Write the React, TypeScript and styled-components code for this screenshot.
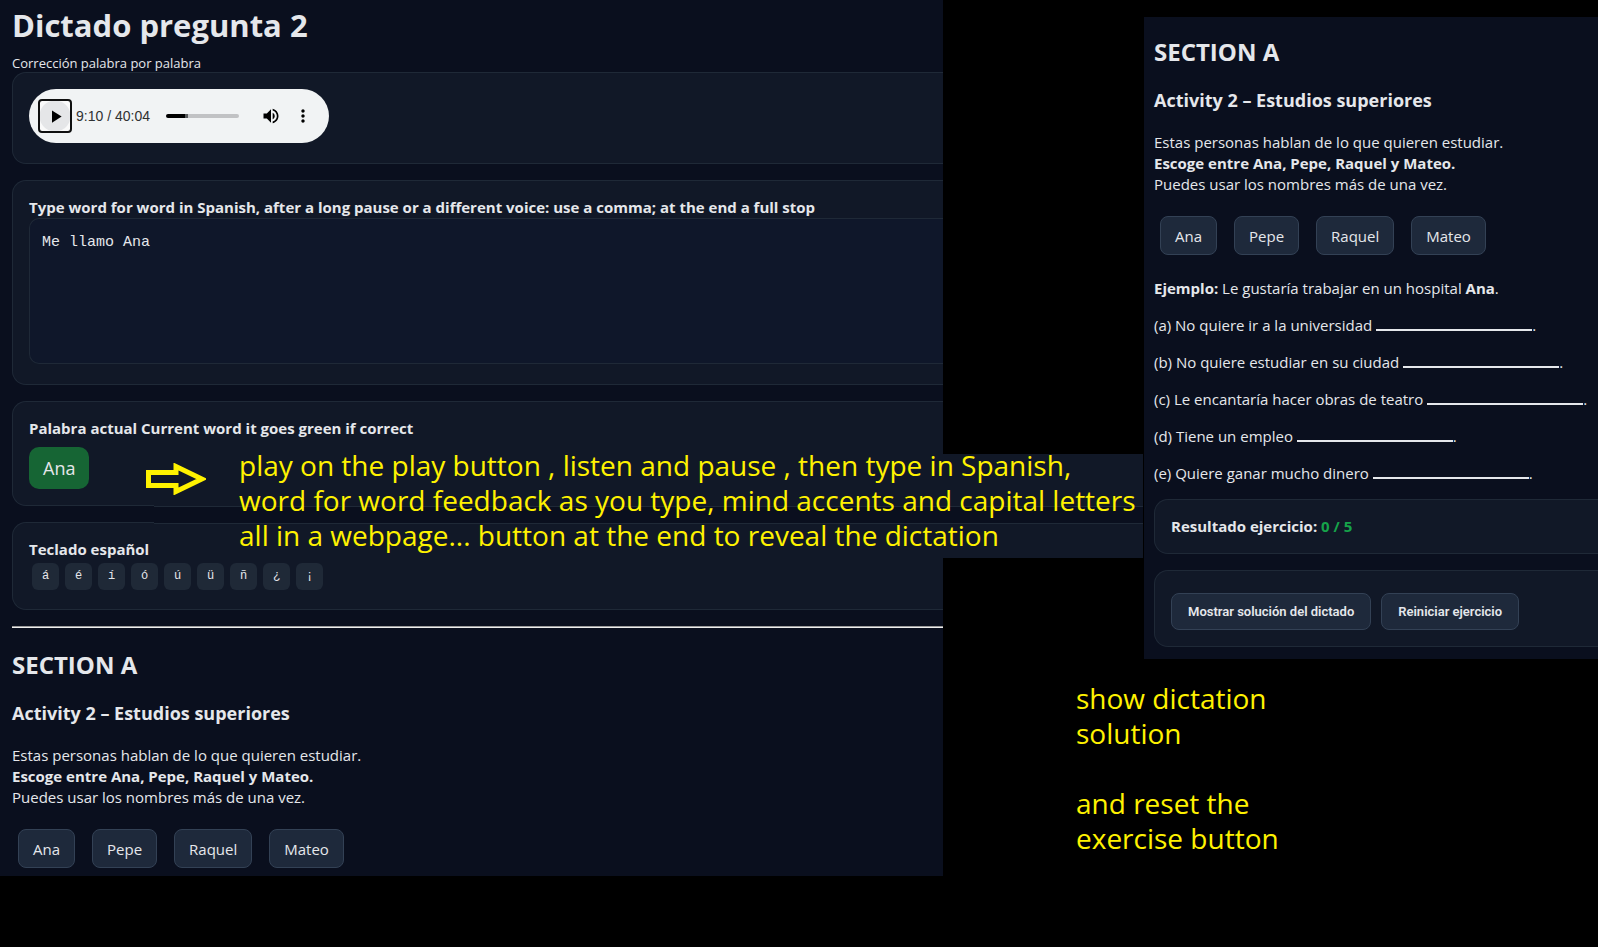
import React, { useState } from "react";
import styled, { createGlobalStyle, css } from "styled-components";
import { MdMoreVert, MdPlayArrow, MdVolumeUp } from "react-icons/md";

const GlobalStyle = createGlobalStyle`
  *, *::before, *::after { box-sizing: border-box; }
  body {
    margin: 0;
    background: #000;
    color: #e5e7eb;
    font-family: "Open Sans", "Noto Sans", sans-serif;
    font-size: 15px;
    line-height: 21px;
  }
  h1, h2, h3, p { margin: 0; }
  button { font: inherit; color: inherit; cursor: pointer; }
`;

const mono = css`
  font-family: "Liberation Mono", monospace;
`;

const Page = styled.div`
  position: relative;
  display: grid;
  grid-template-columns: minmax(0, 943fr) minmax(0, 201fr) minmax(0, 454fr);
  align-items: start;
  min-height: 100vh;
  overflow: hidden;
`;

const Panel = styled.section`
  background: #0a0f1e;
  overflow: hidden;
`;

const DictationPanel = styled(Panel)`
  grid-column: 1;
  padding: 4px 0 8px 12px;
`;

const ExercisePanel = styled(Panel)`
  grid-column: 3;
  margin-top: 17px;
  padding: 19px 0 12px 10px;
`;

const Title = styled.h1`
  font-size: 31px;
  line-height: 42px;
  white-space: nowrap;
`;

const Subtitle = styled.p`
  margin-top: 8px;
  font-size: 13px;
  line-height: 18px;
`;

const Card = styled.div`
  padding: 16px;
  background: #111827;
  border: 1px solid #1f2937;
  border-right: 0;
  border-radius: 14px 0 0 14px;

  & + & { margin-top: 16px; }
`;

const CardLabel = styled.label`
  display: block;
  font-weight: 700;
  white-space: nowrap;
`;

const Player = styled.div`
  display: flex;
  align-items: center;
  width: 300px;
  height: 54px;
  margin-bottom: 4px;
  padding: 0 10px 0 9px;
  background: #f1f3f4;
  border-radius: 27px;
  color: #000;

  & > * { flex-shrink: 0; }
`;

const PlayButton = styled.button`
  display: grid;
  place-items: center;
  width: 34px;
  height: 34px;
  padding: 0;
  border: 2px solid #101010;
  border-radius: 4px;
  background: radial-gradient(circle, #e5e6e8 15px, #fafafa 16px);
`;

const Time = styled.span`
  margin-left: 4px;
  width: 90px;
  font-family: "Liberation Sans", Arial, sans-serif;
  font-size: 14px;
  color: #303132;
`;

const Seek = styled.input`
  appearance: none;
  width: 73px;
  height: 4px;
  margin: 0 16px 0 0;
  border-radius: 2px;
  background: linear-gradient(to right, #000 26%, #55585a 26% 30%, #c1c2c4 30%);

  &::-webkit-slider-thumb { appearance: none; width: 0; height: 0; }
`;

const PlayerButton = styled.button`
  display: grid;
  place-items: center;
  width: 32px;
  height: 32px;
  padding: 0;
  border: 0;
  background: transparent;
`;

const Answer = styled.textarea`
  ${mono}
  display: block;
  width: 100%;
  height: 146px;
  margin-bottom: 4px;
  padding: 13px 12px;
  border: 1px solid #1f2937;
  border-right: 0;
  border-radius: 10px 0 0 10px;
  background: #0f172a;
  color: #e5e7eb;
  font-size: 15px;
  line-height: 21px;
  resize: none;
  outline: none;
`;

const AnswerCard = styled(Card)`
  padding-right: 0;
`;

const CurrentWord = styled.output`
  display: block;
  width: fit-content;
  margin-top: 8px;
  padding: 8px 14px;
  border-radius: 10px;
  background: #166534;
  font-size: 18px;
  line-height: 26px;
`;

const Keys = styled.div`
  display: flex;
  gap: 6px;
  padding: 3px;
`;

const Key = styled.button`
  && { ${mono} }
  width: 27px;
  height: 27px;
  padding: 0;
  border: 0;
  border-radius: 6px;
  background: #1f2937;
  font-size: 12px;
`;

const Divider = styled.hr`
  height: 2px;
  margin: 16px 0 21px;
  border: 0;
  border-top: 1px solid #9a9a9a;
  background: #eee;
`;

const SectionTitle = styled.h2`
  font-size: 24px;
  line-height: 32px;
`;

const ActivityTitle = styled.h3`
  margin-top: 20px;
  font-size: 18px;
  line-height: 25px;
`;

const Instructions = styled.p`
  margin-top: 19px;
  white-space: nowrap;
`;

const Names = styled.div`
  display: flex;
  gap: 17px;
  margin-top: 21px;
  padding-left: 6px;
`;

const NameChip = styled.button`
  height: 39px;
  padding: 1px 14px 0;
  border: 1px solid #334155;
  border-radius: 8px;
  background: #1e293b;
`;

const Sentences = styled.div`
  display: flex;
  flex-direction: column;
  gap: 16px;
  margin: 23px 0 15px;
  white-space: nowrap;
`;

const Blank = styled.span`
  display: inline-block;
  width: 156px;
  border-bottom: 2px solid #e5e7eb;
`;

const Score = styled.strong`
  color: #16a34a;
`;

const Actions = styled.div`
  display: flex;
  gap: 10px;
  padding-top: 6px;
`;

const ActionButton = styled.button`
  height: 37px;
  padding: 0 16px;
  border: 1px solid #334155;
  border-radius: 8px;
  background: #1e293b;
  && {
    font-family: Roboto, "Liberation Sans", sans-serif;
    font-size: 13px;
    font-weight: 600;
  }
  white-space: nowrap;
`;

const noteText = css`
  color: #fff200;
  font-size: 28px;
  line-height: 35px;
  white-space: nowrap;
`;

/* Caption strip laid over the cards, carrying the gap between them along with it. */
const HowToNote = styled.p`
  ${noteText}
  position: absolute;
  top: 448px;
  left: 154px;
  right: calc(100% * 454 / 1598 + 1px);
  height: 110px;
  padding-left: 85px;
  background: linear-gradient(
    transparent 6px,
    #111827 6px 58px,
    #1f2937 58px 59px,
    #0a0f1e 59px 75px,
    #1f2937 75px 76px,
    #111827 76px
  );
`;

const ButtonsNote = styled.div`
  ${noteText}
  position: absolute;
  top: 681px;
  left: calc(100% * 1076 / 1598);

  p + p { margin-top: 35px; }
`;

const Arrow = styled.svg`
  position: absolute;
  top: 463px;
  left: 146px;
`;

const NAMES = ["Ana", "Pepe", "Raquel", "Mateo"];
const ACCENTS = ["á", "é", "í", "ó", "ú", "ü", "ñ", "¿", "¡"];
const SENTENCES = [
  "(a) No quiere ir a la universidad",
  "(b) No quiere estudiar en su ciudad",
  "(c) Le encantaría hacer obras de teatro",
  "(d) Tiene un empleo",
  "(e) Quiere ganar mucho dinero",
];

function ActivityIntro() {
  return (
    <>
      <SectionTitle>SECTION A</SectionTitle>
      <ActivityTitle>Activity 2 – Estudios superiores</ActivityTitle>
      <Instructions>
        Estas personas hablan de lo que quieren estudiar.
        <br />
        <strong>Escoge entre Ana, Pepe, Raquel y Mateo.</strong>
        <br />
        Puedes usar los nombres más de una vez.
      </Instructions>
      <Names>
        {NAMES.map((name) => (
          <NameChip key={name} type="button">{name}</NameChip>
        ))}
      </Names>
    </>
  );
}

function AudioPlayer() {
  return (
    <Player>
      <PlayButton type="button" aria-label="Play"><MdPlayArrow size={21} /></PlayButton>
      <Time>9:10 / 40:04</Time>
      <Seek type="range" min={0} max={2404} defaultValue={550} aria-label="Seek" />
      <PlayerButton type="button" aria-label="Mute"><MdVolumeUp size={20} /></PlayerButton>
      <PlayerButton type="button" aria-label="More options"><MdMoreVert size={20} /></PlayerButton>
    </Player>
  );
}

export default function App() {
  const [answer, setAnswer] = useState("Me llamo Ana");
  const currentWord = answer.trim().split(/\s+/).pop();

  return (
    <>
      <GlobalStyle />
      <Page>
        <DictationPanel>
          <Title>Dictado pregunta 2</Title>
          <Subtitle>Corrección palabra por palabra</Subtitle>
          <Card><AudioPlayer /></Card>
          <AnswerCard>
            <CardLabel htmlFor="answer">
              Type word for word in Spanish, after a long pause or a different voice: use a comma; at the end a full stop
            </CardLabel>
            <Answer
              id="answer"
              spellCheck={false}
              value={answer}
              onChange={(event) => setAnswer(event.target.value)}
            />
          </AnswerCard>
          <Card>
            <CardLabel htmlFor="current-word">Palabra actual Current word it goes green if correct</CardLabel>
            <CurrentWord id="current-word">{currentWord}</CurrentWord>
          </Card>
          <Card>
            <CardLabel as="div">Teclado español</CardLabel>
            <Keys>
              {ACCENTS.map((letter) => (
                <Key key={letter} type="button" onClick={() => setAnswer(answer + letter)}>{letter}</Key>
              ))}
            </Keys>
          </Card>
          <Divider />
          <ActivityIntro />
        </DictationPanel>

        <ExercisePanel>
          <ActivityIntro />
          <Sentences>
            <p><strong>Ejemplo:</strong> Le gustaría trabajar en un hospital <strong>Ana</strong>.</p>
            {SENTENCES.map((sentence) => (
              <p key={sentence}>{sentence} <Blank />.</p>
            ))}
          </Sentences>
          <Card>
            <strong>Resultado ejercicio:</strong> <Score>0 / 5</Score>
          </Card>
          <Card>
            <Actions>
              <ActionButton type="button">Mostrar solución del dictado</ActionButton>
              <ActionButton type="button">Reiniciar ejercicio</ActionButton>
            </Actions>
          </Card>
        </ExercisePanel>

        <HowToNote>
          play on the play button , listen and pause , then type in Spanish,
          <br />
          word for word feedback as you type, mind accents and capital letters
          <br />
          all in a webpage... button at the end to reveal the dictation
        </HowToNote>
        <Arrow width="60" height="32" viewBox="0 0 60 32" fill="none" stroke="#fff200" strokeWidth="5" aria-hidden="true">
          <path d="M2.5 9.5H30V3.5L56 16L30 28.5V22.5H2.5Z" />
        </Arrow>
        <ButtonsNote>
          <p>show dictation<br />solution</p>
          <p>and reset the<br />exercise button</p>
        </ButtonsNote>
      </Page>
    </>
  );
}
